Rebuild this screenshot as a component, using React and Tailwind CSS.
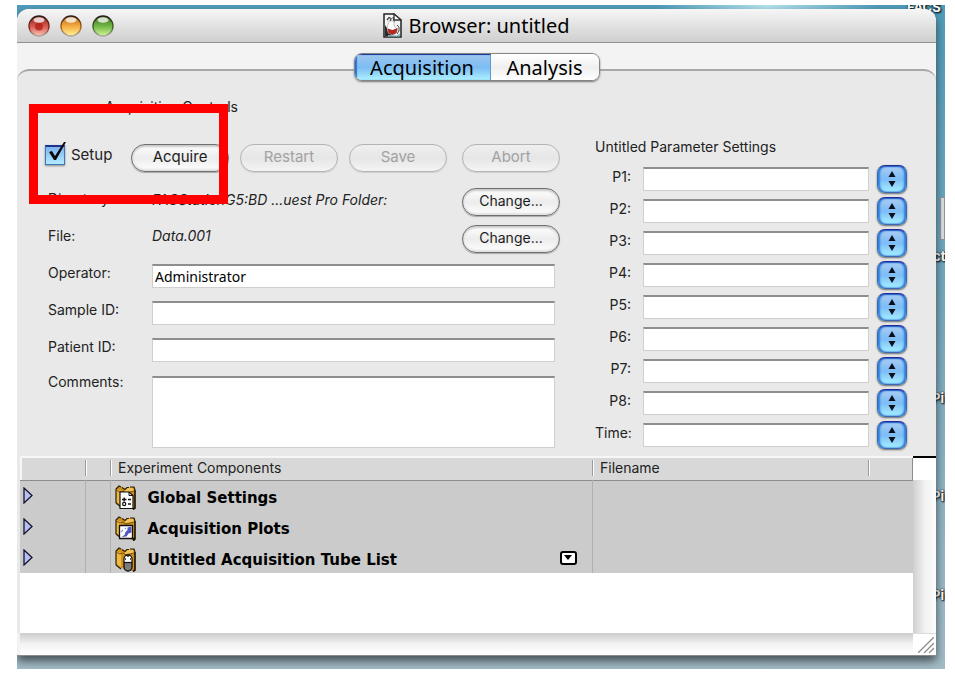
import React from "react";

const PARAMS = ["P1", "P2", "P3", "P4", "P5", "P6", "P7", "P8", "Time"];

const DESKTOP_LABELS = [
  { text: "FACS", place: "-top-[6px] left-[890px]" },
  { text: "ct", place: "top-[243px] left-[916px]" },
  { text: "Pi", place: "top-[385px] left-[915px]" },
  { text: "Pi", place: "top-[483px] left-[915px]" },
  { text: "Pi", place: "top-[582px] left-[915px]" },
];

const FIELD =
  "h-6 border border-t-2 border-[#cfcfcf] border-t-[#8e8e8e] bg-white px-0.5 text-sm leading-5 text-black outline-none";

function TrafficLight({ label, colors, dot }) {
  const id = "light-" + label;
  return (
    <button type="button" aria-label={label} className="size-[22px]">
      <svg viewBox="0 0 22 22" className="size-full">
        <defs>
          <linearGradient id={id} x1="0" y1="0" x2="0" y2="1">
            <stop offset="0" stopColor={colors[0]} />
            <stop offset="0.5" stopColor={colors[1]} />
            <stop offset="1" stopColor={colors[2]} />
          </linearGradient>
          <linearGradient id={id + "-rim"} x1="0" y1="0" x2="0" y2="1">
            <stop offset="0" stopColor="#2c1a16" />
            <stop offset="0.6" stopColor={colors[0]} />
            <stop offset="1" stopColor="#a9a9a0" />
          </linearGradient>
        </defs>
        <circle cx="11" cy="11" r="10" fill={`url(#${id})`} stroke={`url(#${id}-rim)`} strokeWidth="1.4" />
        {dot && <circle cx="11" cy="11.5" r="4" fill="#b01c14" opacity="0.75" />}
        <ellipse cx="11" cy="5" rx="5.5" ry="2.8" fill="#fff" opacity="0.75" />
      </svg>
    </button>
  );
}

function DocumentIcon() {
  return (
    <svg viewBox="0 0 19 25" className="h-[25px] w-[19px]" aria-hidden="true">
      <path d="M1 1h10l7 6v17H1z" fill="#f4f4f4" stroke="#222" strokeWidth="1.5" />
      <path d="M11 1v6h7z" fill="#fff" stroke="#333" strokeWidth="1.3" />
      <path d="M4 7l2-2.500 2 1-1 4M10 4l1 4-1 3" fill="none" stroke="#444" strokeWidth="1.3" />
      <path d="M2 22V12l2 3 1 5 4 2-1 1H2z" fill="#2a2a2a" />
      <path d="M6 8l-2 7 2 5 6 1 3-4-4-4V8z" fill="#fff" stroke="#999" strokeWidth="0.6" />
      <path d="M4.500 15.500l5 1.500 5-2-1 5-4 2-4-2z" fill="#b32a22" />
      <path d="M5 22l9 .500 3-2v3H5z" fill="#7fb4bc" />
      <path d="M14 12l2 2v4l-2 3" fill="none" stroke="#444" strokeWidth="1" />
    </svg>
  );
}

function FolderIcon({ kind }) {
  return (
    <svg viewBox="0 0 21 25" className="h-[25px] w-[21px]" aria-hidden="true">
      <path d="M1 4l3-3 3 1 3 2 2-2h7l1 2v19l-2 1-12-3-5-3z" fill="#d0921f" />
      <path d="M1 4l5 2v14l-5-3z" fill="#efb944" />
      <path d="M10 4l3-2 5 1 1 3-9 1z" fill="#f3c35a" />
      <path d="M1 18V4l3-3 2 1M7 2.500l3 2 2-2h2M15 2h4l1 3" fill="none" stroke="#2b1e04" strokeWidth="1.200" />
      <path d="M1 5l4 2 3-1 3 2 4-1 4-1" fill="none" stroke="#6b4a0b" strokeWidth="0.900" />
      <path d="M20 5v18l-2 1.500" fill="none" stroke="#171000" strokeWidth="1.600" />
      <path d="M1 18l5 4" fill="none" stroke="#2b1e04" strokeWidth="1.200" />
      {kind === "settings" && (
        <g>
          <path d="M5 7h9l4 3.500V23.500H5z" fill="#fff" stroke="#111" strokeWidth="1.200" />
          <path d="M14 7v3.500h4" fill="none" stroke="#111" />
          <path d="M7 14.500h4.500M9.200 12.500v4M13 14.500h3M13 19h3" stroke="#111" strokeWidth="1.400" />
          <circle cx="9.200" cy="19" r="1.600" fill="none" stroke="#111" strokeWidth="1.200" />
        </g>
      )}
      {kind === "plots" && (
        <g>
          <path d="M4.500 9.500h13v13h-13z" fill="#fff" stroke="#111" strokeWidth="1.300" />
          <path d="M16.500 10.500v6l-3 1-2 3-5 .500 3-2 1-3 2-2v-2.500z" fill="#5058bd" />
          <path d="M6 16l2-2M11 12l-1 1" stroke="#8d93de" strokeWidth="1.300" />
          <path d="M17 22.500h2v2" fill="none" stroke="#111" strokeWidth="1.600" />
        </g>
      )}
      {kind === "tubes" && (
        <g>
          <rect x="9" y="8" width="8" height="16" rx="4" fill="#7b7b7b" stroke="#111" strokeWidth="1.300" />
          <path d="M9.700 15v-3a3.300 3.300 0 0 1 6.600 0v3z" fill="#fff" />
          <path d="M9 15.500h8" stroke="#111" strokeWidth="1.200" />
          <path d="M13 8v2M10 12h1M15 12h1" stroke="#222" strokeWidth="1.400" />
        </g>
      )}
    </svg>
  );
}

function PushButton({ children, disabled }) {
  return (
    <button
      type="button"
      disabled={disabled}
      className="h-7 w-[98px] shrink-0 rounded-full border border-[#6f6f6f] bg-linear-to-b from-white via-[#ececec] to-white pb-0.5 text-[#1c1c1c] shadow-[inset_0_2px_2px_#c9c9c9,inset_0_-2px_2px_#e0e0e0,0_1px_1px_#aaa] disabled:border-[#b4b4b4] disabled:from-[#efefef] disabled:via-[#e6e6e6] disabled:to-[#f4f4f4] disabled:text-[#a2a2a2] disabled:shadow-[0_1px_1px_#d0d0d0]"
    >
      {children}
    </button>
  );
}

function FormRow({ label, htmlFor, children }) {
  return (
    <div className="flex h-[37px] items-center pl-[3px]">
      <label htmlFor={htmlFor} className="w-[104px] shrink-0 pb-1.5">
        {label}
      </label>
      {children}
    </div>
  );
}

function ParameterRow({ name }) {
  const id = "param-" + name;
  return (
    <div className="flex h-8 items-center">
      <label htmlFor={id} className="w-9 shrink-0 pb-1 text-right">
        {name}:
      </label>
      <input id={id} className={`${FIELD} ml-3 min-w-0 flex-1`} />
      <button
        type="button"
        aria-label={`${name} presets`}
        className="ml-2 flex h-7 w-[30px] shrink-0 items-center justify-center rounded-lg border border-[#3a6cb4] border-t-[#1b2f96] bg-linear-to-b from-[#a9cdf3] via-[#7cbcf5] to-[#a8f0ff] shadow-[inset_2px_0_2px_#2f7ddc,inset_-2px_0_2px_#2f7ddc,inset_0_1px_1px_#2a48b4,0_1px_2px_#666]"
      >
        <svg viewBox="0 0 8 16" className="h-4 w-2" aria-hidden="true">
          <path d="M4 0l3.500 6h-7zM4 16l3.500-6h-7z" fill="#0a0f1c" />
        </svg>
      </button>
    </div>
  );
}

function Disclosure({ name }) {
  return (
    <button type="button" aria-label={`Expand ${name}`} className="flex pl-[3px]">
      <svg viewBox="0 0 10 17" className="h-[17px] w-2.5" aria-hidden="true">
        <path d="M1 1l8 7.500-8 7.500z" fill="#b9bff5" stroke="#15152e" strokeWidth="1.300" />
      </svg>
    </button>
  );
}

function ComponentRow({ name, kind, menu }) {
  return (
    <tr className="h-[31px]">
      <td className="p-0"><Disclosure name={name} /></td>
      <td className="border-l border-[#b0b0b0] p-0" />
      <td className="border-l border-[#b0b0b0] p-0">
        <div className="flex items-center pt-1 pr-[15px] pl-1">
          <FolderIcon kind={kind} />
          <span className="ml-3 flex-1 font-['DejaVu_Sans',sans-serif] text-[15px] leading-5 font-bold text-black">
            {name}
          </span>
          {menu && (
            <button
              type="button"
              aria-label={`${name} menu`}
              className="mb-1 flex h-3.5 w-[17px] items-center justify-center rounded-[3px] border-2 border-black bg-white"
            >
              <svg viewBox="0 0 8 5" className="h-[5px] w-2" aria-hidden="true">
                <path d="M0 0h8l-4 5z" />
              </svg>
            </button>
          )}
        </div>
      </td>
      <td className="border-l border-[#b0b0b0] p-0" />
      <td className="p-0" />
    </tr>
  );
}

function HeaderCell({ children, first }) {
  return (
    <th className="p-0 text-left font-normal">
      <div
        className={
          first
            ? "h-4"
            : "flex h-4 items-center border-l border-[#9a9a9a] pl-[7px] leading-4 shadow-[inset_1px_0_0_#fff]"
        }
      >
        {children}
      </div>
    </th>
  );
}

export default function App() {
  return (
    <div className="bg-white pt-[5px] pr-2.5 pb-[7px] pl-[17px] font-[Inter,sans-serif] text-sm leading-5 text-[#222]">
      <div className="relative overflow-hidden bg-linear-to-b from-[#4f9dbb] to-[#a3bdc7] pt-1 pr-[9px] pb-[13px]">
        {/* Desktop behind the window */}
        <div className="absolute top-0 left-[640px] h-1 w-[220px] bg-linear-to-r from-transparent via-[#b5e4f0] to-transparent" />
        <div className="absolute top-[192px] right-0 h-[43px] w-[5px] border border-[#8d979c] bg-[#dcdfe2]" />
        {DESKTOP_LABELS.map((item, i) => (
          <span
            key={i}
            className={`absolute ${item.place} text-[13px] leading-4 font-bold whitespace-nowrap text-white [text-shadow:1px_1px_2px_#000,0_0_2px_#000]`}
          >
            {item.text}
          </span>
        ))}

        {/* Browser window */}
        <div className="relative rounded-t-xl bg-[#f3f3f3] shadow-[0_5px_10px_rgba(40,40,45,0.75)]">
          <header className="flex h-[34px] items-center rounded-t-xl border-b border-[#929292] bg-linear-to-b from-[#f6f6f6] to-[#cfcfcf] px-[11px]">
            <div className="flex flex-1 gap-2.5">
              <TrafficLight label="Close" colors={["#8c2a22", "#d3564b", "#ffc4b5"]} dot />
              <TrafficLight label="Minimize" colors={["#b06a1c", "#f5a93f", "#fff59a"]} />
              <TrafficLight label="Zoom" colors={["#3d6e25", "#6fb544", "#d6f79a"]} />
            </div>
            <h1 className="flex items-center gap-1.5 font-['Noto_Sans',sans-serif] text-xl leading-6 text-black">
              <DocumentIcon />
              Browser: untitled
            </h1>
            <div className="flex-1" />
          </header>

          <main className="mt-[26px] rounded-t-xl border-t-2 border-[#a8a8a8] bg-[#e9e9e9]">
            <nav
              role="tablist"
              className="relative mx-auto -mt-[18px] flex h-7 w-[246px] overflow-hidden rounded-lg border border-[#858585] font-['Noto_Sans',sans-serif] text-xl leading-6 text-black shadow-[0_1px_2px_#777]"
            >
              <button
                type="button"
                role="tab"
                aria-selected="true"
                className="w-[136px] border-t border-r border-t-[#1c3a9c] border-r-[#5c9ad2] bg-linear-to-b from-[#9cc6ee] via-[#7cbcf4] to-[#aef2ff] shadow-[inset_2px_0_1px_#2a6fd6]"
              >
                Acquisition
              </button>
              <button
                type="button"
                role="tab"
                aria-selected="false"
                className="flex-1 border-t border-transparent bg-linear-to-b from-white via-[#efefef] to-white"
              >
                Analysis
              </button>
            </nav>

            <h2 className="mt-4 pl-[88px]">Acquisition Controls</h2>

            <form
              className="mt-5 grid grid-cols-[515fr_312fr] gap-[35px] pr-[29px] pb-[5px] pl-7"
              onSubmit={(e) => e.preventDefault()}
            >
              <div className="pt-[7px]">
                <div className="mb-[11px] flex h-7 items-center text-[15px] leading-5">
                  <label className="flex flex-1 items-center gap-1.5 pb-1.5">
                    <span className="relative size-5">
                      <input
                        type="checkbox"
                        defaultChecked
                        className="block size-5 appearance-none border border-t-2 border-[#3f78b8] border-t-[#1b348f] bg-linear-to-b from-[#7db4ee] to-[#b2ecff] shadow-[0_1px_2px_#888]"
                      />
                      <svg
                        viewBox="0 0 22 22"
                        className="pointer-events-none absolute -top-1 left-0 size-[22px]"
                        aria-hidden="true"
                      >
                        <path d="M4 11l3-1 3 5L19 1l2 0L11 19H9z" fill="#0b0b0b" />
                      </svg>
                    </span>
                    Setup
                  </label>
                  <div className="flex gap-[11px]">
                    <PushButton>Acquire</PushButton>
                    <PushButton disabled>Restart</PushButton>
                    <PushButton disabled>Save</PushButton>
                  </div>
                  <div className="ml-[15px] flex">
                    <PushButton disabled>Abort</PushButton>
                  </div>
                </div>

                <FormRow label="Directory:" htmlFor="directory">
                  <output id="directory" className="flex-1 pb-1 italic">
                    FACStationG5:BD ...uest Pro Folder:
                  </output>
                  <PushButton>Change...</PushButton>
                </FormRow>
                <FormRow label="File:" htmlFor="file">
                  <output id="file" className="flex-1 pb-1.5 italic">
                    Data.001
                  </output>
                  <PushButton>Change...</PushButton>
                </FormRow>
                <FormRow label="Operator:" htmlFor="operator">
                  <input
                    id="operator"
                    defaultValue="Administrator"
                    className={`${FIELD} mr-[5px] min-w-0 flex-1 font-['Noto_Sans',sans-serif]`}
                  />
                </FormRow>
                <FormRow label="Sample ID:" htmlFor="sample">
                  <input id="sample" className={`${FIELD} mr-[5px] min-w-0 flex-1`} />
                </FormRow>
                <FormRow label="Patient ID:" htmlFor="patient">
                  <input id="patient" className={`${FIELD} mr-[5px] min-w-0 flex-1`} />
                </FormRow>
                <div className="flex items-start pt-2 pl-[3px]">
                  <label htmlFor="comments" className="w-[104px] shrink-0">
                    <span className="-mt-1 block">Comments:</span>
                  </label>
                  <textarea
                    id="comments"
                    className="mr-[5px] block h-[72px] min-w-0 flex-1 resize-none border border-t-2 border-[#cfcfcf] border-t-[#8e8e8e] bg-white outline-none"
                  />
                </div>
              </div>

              <section>
                <h2 className="mb-1.5">Untitled Parameter Settings</h2>
                {PARAMS.map((name) => (
                  <ParameterRow key={name} name={name} />
                ))}
              </section>
            </form>
          </main>

          {/* Experiment components list */}
          <div className="flex bg-[#e9e9e9] pl-[3px]">
            <div className="flex-1 bg-white">
              <table className="w-full table-fixed border-collapse">
                <colgroup>
                  <col className="w-[65px]" />
                  <col className="w-[25px]" />
                  <col />
                  <col className="w-[276px]" />
                  <col className="w-[45px]" />
                </colgroup>
                <thead>
                  <tr className="h-6 border-b border-[#8d8d8d] bg-[#d8d8d8] shadow-[inset_2px_2px_0_#f6f6f6,inset_-1px_0_0_#8d8d8d]">
                    <HeaderCell first />
                    <HeaderCell />
                    <HeaderCell>Experiment Components</HeaderCell>
                    <HeaderCell>Filename</HeaderCell>
                    <HeaderCell />
                  </tr>
                </thead>
                <tbody className="bg-[#cbcbcb]">
                  <ComponentRow name="Global Settings" kind="settings" />
                  <ComponentRow name="Acquisition Plots" kind="plots" />
                  <ComponentRow name="Untitled Acquisition Tube List" kind="tubes" menu />
                </tbody>
              </table>
              <div className="h-[60px]" />
            </div>
            <div className="flex w-[23px] flex-col">
              <div className="h-6 border-t-2 border-black bg-white" />
              <div className="flex-1 bg-linear-to-r from-[#cfcfcf] via-[#f1f1f1] to-[#fcfcfc]" />
            </div>
          </div>
          <footer className="flex h-[23px] border-b border-[#8a8a8a] pl-[3px]">
            <div className="flex-1 bg-linear-to-b from-[#cccccc] via-[#f3f3f3] to-white" />
            <div className="flex w-[23px] items-end justify-end border-t border-[#dcdcdc] bg-white pr-0.5 pb-0.5">
              <svg viewBox="0 0 16 16" className="size-4" aria-hidden="true">
                <path d="M0 16L16 0M6 16L16 6M11 16l5-5" stroke="#8c8c8c" strokeWidth="1.300" />
              </svg>
            </div>
          </footer>

          {/* Highlight around the setup controls */}
          <div className="pointer-events-none absolute top-[95px] left-3 h-[100px] w-[199px] border-9 border-[#ff0000]" />
        </div>
      </div>
    </div>
  );
}
